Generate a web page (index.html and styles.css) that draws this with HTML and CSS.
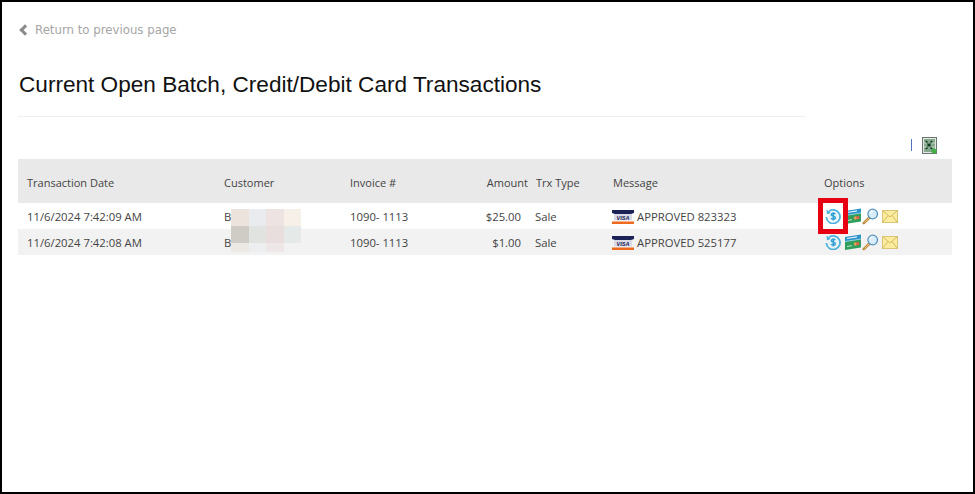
FILE: index.html
```html
<!DOCTYPE html>
<html lang="en">
<head>
    <meta charset="UTF-8">
    <title>Current Open Batch</title>
    <link rel="stylesheet" href="styles.css">
</head>
<body>
    <svg class="defs" width="0" height="0">
        <symbol id="ico-dollar" viewBox="0 0 16 16">
            <path d="M4.200 3.200A6.800 6.800 0 1 1 1.400 9" fill="none" stroke="#4db2de" stroke-width="1.800"/>
            <path d="M1.500 1.600l.4 4.600 4.400-1z" fill="#4db2de"/>
            <circle cx="8.200" cy="8.300" r="4.600" fill="#e3f3fb"/>
            <path d="M10.300 6.100C9.400 5 6.400 5 6.300 6.800c0 2 4.100 1 4.100 3 0 1.800-3.200 1.700-4.300.5M8.300 4.200v8.200" fill="none" stroke="#2f9fd4" stroke-width="1.500"/>
        </symbol>
        <symbol id="ico-card" viewBox="0 0 16 16">
            <path d="M0 3L16 .5v5L0 8z" fill="#2c93c9"/>
            <path d="M0 7.500L16 5v8.500L0 16z" fill="#2f9e5c"/>
            <path d="M2 4.500l10-1.600" stroke="#e2f3f9" stroke-width="1.200"/>
            <path d="M0 7.500L16 5" stroke="#8fd0e6" stroke-width="1"/>
            <circle cx="10.500" cy="10" r="1.700" fill="#e8a04c"/>
            <circle cx="12.800" cy="9.600" r="1.700" fill="#e05f4a"/>
            <path d="M2 12.500l5-.8" stroke="#bfe3c6" stroke-width="1"/>
        </symbol>
        <symbol id="ico-search" viewBox="0 0 17 17">
            <path d="M7.500 9.500L1.800 15.200" stroke="#b98a3c" stroke-width="2.600" stroke-linecap="round"/>
            <path d="M7.500 9.500L2.500 14.500" stroke="#ecc67e" stroke-width="1"/>
            <circle cx="10.700" cy="6" r="4.800" fill="#d7eefa" stroke="#5a93bd" stroke-width="1.300"/>
            <path d="M8 5.200a3 3 0 0 1 2.500-2" fill="none" stroke="#fff" stroke-width="1.200"/>
        </symbol>
        <symbol id="ico-mail" viewBox="0 0 16 13">
            <rect x=".5" y=".5" width="15" height="12" fill="#fbeca0" stroke="#d9c578"/>
            <path d="M.5.500L8 7l7.500-6.500M.5 12.500L6 5.500M15.500 12.500L10 5.500" fill="none" stroke="#d4b95e"/>
        </symbol>
        <symbol id="ico-excel" viewBox="0 0 15 17">
            <rect x=".5" y=".5" width="14" height="16" fill="#e3e8e3" stroke="#6b776e"/>
            <rect x="2" y="2" width="11" height="13" fill="#86a98d"/>
            <path d="M4 4l6 8M10 4l-6 8" stroke="#123d22" stroke-width="2"/>
            <path d="M2 6h11M2 10h11" stroke="#dbe8dd" stroke-width=".7"/>
            <circle cx="12" cy="14" r="2.600" fill="#45b04a"/>
        </symbol>
    </svg>

    <div class="page">
        <a class="back-link" href="#"><span class="chev"></span>Return to previous page</a>
        <h1>Current Open Batch, Credit/Debit Card Transactions</h1>
        <div class="rule"></div>

        <div class="export-bar">
            <span class="sep"></span>
            <svg class="ico-excel"><use href="#ico-excel"/></svg>
        </div>

        <div class="table-wrap">
            <table>
                <thead>
                    <tr>
                        <th class="c-date">Transaction Date</th>
                        <th class="c-cust">Customer</th>
                        <th class="c-inv">Invoice #</th>
                        <th class="c-amt">Amount</th>
                        <th class="c-type">Trx Type</th>
                        <th class="c-msg">Message</th>
                        <th>Options</th>
                    </tr>
                </thead>
                <tbody>
                    <tr>
                        <td>11/6/2024 7:42:09 AM</td>
                        <td class="cust">Bl</td>
                        <td>1090- 1113</td>
                        <td class="amt">$25.00</td>
                        <td class="type">Sale</td>
                        <td class="msg"><svg class="ico-visa" viewBox="0 0 22 14">
                            <path d="M0 0h22v3l-3 1H3L0 3z" fill="#1b2356"/>
                            <rect x="2" y="4" width="18" height="6.500" fill="#d9dae6"/>
                            <text x="11" y="9.700" class="visa-text">VISA</text>
                            <rect y="11.500" width="22" height="2.500" fill="#ee6a1f"/>
                        </svg>APPROVED 823323</td>
                        <td class="opts">
                            <svg class="i-dollar"><use href="#ico-dollar"/></svg>
                            <svg class="i-card"><use href="#ico-card"/></svg>
                            <svg class="i-search"><use href="#ico-search"/></svg>
                            <svg class="i-mail"><use href="#ico-mail"/></svg>
                        </td>
                    </tr>
                    <tr class="alt">
                        <td>11/6/2024 7:42:08 AM</td>
                        <td class="cust">Bl</td>
                        <td>1090- 1113</td>
                        <td class="amt">$1.00</td>
                        <td class="type">Sale</td>
                        <td class="msg"><svg class="ico-visa" viewBox="0 0 22 14">
                            <path d="M0 0h22v3l-3 1H3L0 3z" fill="#1b2356"/>
                            <rect x="2" y="4" width="18" height="6.500" fill="#d9dae6"/>
                            <text x="11" y="9.700" class="visa-text">VISA</text>
                            <rect y="11.500" width="22" height="2.500" fill="#ee6a1f"/>
                        </svg>APPROVED 525177</td>
                        <td class="opts">
                            <svg class="i-dollar"><use href="#ico-dollar"/></svg>
                            <svg class="i-card"><use href="#ico-card"/></svg>
                            <svg class="i-search"><use href="#ico-search"/></svg>
                            <svg class="i-mail"><use href="#ico-mail"/></svg>
                        </td>
                    </tr>
                </tbody>
            </table>

            <!-- blurred out customer names -->
            <div class="blur">
                <i class="b1"></i><i class="b2"></i><i class="b3"></i><i class="b4"></i>
                <i class="b5"></i><i class="b6"></i><i class="b7"></i><i class="b8"></i>
                <i class="b9"></i><i class="b10"></i><i class="b11"></i>
            </div>
            <div class="callout"></div>
        </div>
    </div>
</body>
</html>
```

FILE: styles.css
```css
* {
    box-sizing: border-box;
}

html, body {
    margin: 0;
    height: 100%;
}

body {
    background-color: #fff;
    overflow: hidden;
}

.defs {
    position: absolute;
}

.page {
    height: 494px;
    border: 2px solid #000;
    padding: 20px 21px 0 16px;
}

.back-link {
    display: flex;
    align-items: center;
    height: 16px;
    font-family: "DejaVu Sans", sans-serif;
    font-size: 11.75px;
    color: #a6a6a6;
    text-decoration: none;
}

.chev {
    width: 8px;
    height: 8px;
    margin: 0 6px 0 3px;
    border-left: 3px solid #8a8a8a;
    border-bottom: 3px solid #8a8a8a;
    transform: rotate(45deg);
}

h1 {
    margin: 32px 0 0 1px;
    font-family: "Liberation Sans", Arial, sans-serif;
    font-size: 22.6px;
    font-weight: normal;
    line-height: 30px;
    color: #111;
}

.rule {
    width: 787px;
    height: 1px;
    margin-top: 16px;
    background-color: #eee;
}

.export-bar {
    display: flex;
    justify-content: flex-end;
    align-items: center;
    height: 18px;
    margin-top: 19px;
    padding-right: 15px;
}

.sep {
    width: 1px;
    height: 12px;
    margin-right: 10px;
    background-color: #4f74c4;
}

.ico-excel {
    width: 15px;
    height: 17px;
}

.table-wrap {
    position: relative;
    margin-top: 5px;
}

table {
    width: 934px;
    border-collapse: collapse;
    table-layout: fixed;
    font-family: "Open Sans", sans-serif;
    font-size: 11px;
    color: #444;
}

th {
    height: 44px;
    padding: 3px 0 0 9px;
    background-color: #e9e9e9;
    font-weight: normal;
    text-align: left;
}

td {
    height: 26px;
    padding: 0 0 0 9px;
    font-size: 11.3px;
    white-space: nowrap;
}

.alt td {
    background-color: #f2f2f2;
}

.c-date { width: 197px; }
.c-cust { width: 126px; }
.c-inv { width: 104px; }
.c-amt { width: 83px; text-align: right; padding-right: 0; }
.c-type { width: 76px; padding-left: 8px; }
.c-msg { width: 211px; }

.cust {
    letter-spacing: -0.6px;
}

.amt {
    text-align: right;
    padding-right: 7px;
}

.type {
    padding-left: 7px;
}

.ico-visa {
    width: 22px;
    height: 14px;
    margin: 0 3px 0 -1px;
    vertical-align: -3px;
}

.visa-text {
    font-family: "Liberation Sans", Arial, sans-serif;
    font-size: 5.5px;
    font-weight: bold;
    font-style: italic;
    text-anchor: middle;
    fill: #1b2356;
}

.opts {
    padding-left: 3px;
    font-size: 0;
}

.opts svg {
    vertical-align: middle;
}

.i-dollar {
    width: 16px;
    height: 16px;
    margin-left: 7px;
}

.i-card {
    width: 16px;
    height: 16px;
    margin-left: 4px;
}

.i-search {
    width: 17px;
    height: 17px;
    margin-left: 1px;
}

.i-mail {
    width: 16px;
    height: 13px;
    margin-left: 3px;
}

.blur {
    position: absolute;
    left: 213px;
    top: 50px;
    display: grid;
    grid-template-columns: repeat(4, 17.5px);
    grid-auto-rows: 17px;
}

.blur i { display: block; }
.b1 { background-color: #ece4dc; }
.b2 { background-color: #e9ebee; }
.b3 { background-color: #eee3e3; }
.b4 { background-color: #f7f0e9; }
.b5 { background-color: #cfccc5; }
.b6 { background-color: #e1e3e1; }
.b7 { background-color: #e8dedd; }
.b8 { background-color: #e5e9e8; }
.b9 { background-color: #ece9e5; height: 9px; }
.b10 { background-color: #eceef0; height: 9px; }
.b11 { background-color: #ede8e7; height: 9px; }

.callout {
    position: absolute;
    left: 800px;
    top: 39px;
    width: 30px;
    height: 36px;
    border: 5px solid #e60012;
}
```
